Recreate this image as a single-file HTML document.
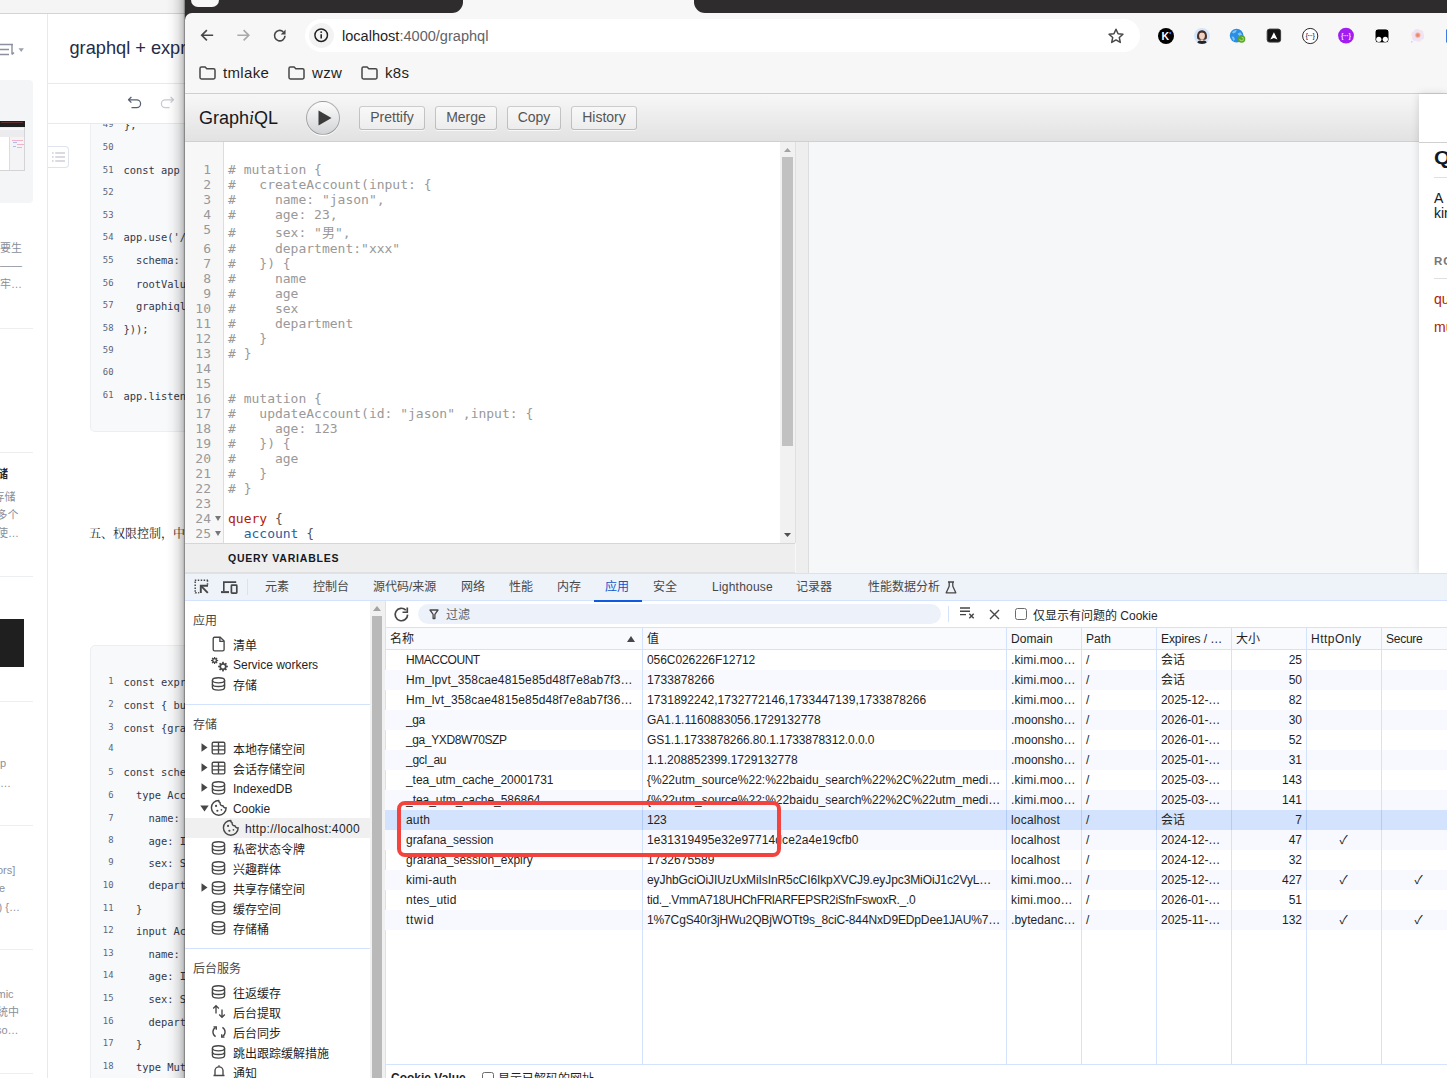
<!DOCTYPE html>
<html lang="zh">
<head>
<meta charset="utf-8">
<title>graphql</title>
<style>
*{box-sizing:border-box;margin:0;padding:0}
html,body{width:1447px;height:1078px;overflow:hidden;background:#fff}
body{position:relative;font-family:"Liberation Sans","Noto Sans CJK SC",sans-serif;font-size:12px;color:#1f1f1f}
.abs{position:absolute}
svg{display:block;position:absolute;overflow:visible}
/* ---------- background doc page (left) ---------- */
#doc{position:absolute;left:0;top:0;width:190px;height:1078px;background:#fff;overflow:hidden}
#doc .topbar{position:absolute;left:0;top:0;width:190px;height:14px;background:#f5f5f5;border-bottom:1px solid #d4d4d4}
#doc .side{position:absolute;left:0;top:14px;width:48px;height:1064px;border-right:1px solid #e6e9f0;background:#fff}
#doc .title{position:absolute;left:69.5px;top:37px;font-size:18.2px;line-height:22px;color:#262b47;white-space:nowrap}
#doc .hl{position:absolute;left:48px;height:1px;background:#e7e9ee;width:141px}
.code1,.code2{position:absolute;left:90px;width:110px;background:#f8f9fa;border:1px solid #eceef1}
.ln{position:absolute;font-family:"DejaVu Sans Mono","Liberation Mono",monospace;font-size:8.9px;color:#5c6379;white-space:pre;text-align:right;width:23.5px;line-height:12px}
.cd{position:absolute;font-family:"DejaVu Sans Mono","Liberation Mono",monospace;font-size:10.4px;color:#33384d;white-space:pre;line-height:12px;margin-top:.8px}
.stx{position:absolute;font-size:11px;color:#8a8f99;white-space:nowrap;line-height:14px}
/* ---------- browser window ---------- */
#shadow{position:absolute;left:166px;top:0;width:19px;height:1078px;background:linear-gradient(to right,rgba(0,0,0,0) 0%,rgba(0,0,0,.03) 35%,rgba(0,0,0,.10) 65%,rgba(0,0,0,.22) 90%,rgba(0,0,0,.34) 95%,rgba(0,0,0,.58) 100%)}
#win{position:absolute;left:185px;top:0;width:1262px;height:1078px;background:#f7f7f7;overflow:hidden}
#tabstrip{position:absolute;left:0;top:0;width:1262px;height:20px;background:#2f2c2d}
#chrome{position:absolute;left:0;top:12.5px;width:1262px;height:81.5px;background:#f7f7f7;border-top-left-radius:7px;border-bottom:1px solid #cfcfcf}
#urlpill{position:absolute;left:120px;top:6.2px;width:835px;height:33.6px;border-radius:17px;background:#fff}
.bm{position:absolute;top:51.5px;letter-spacing:.35px;font-size:15px;color:#1f1f1f;line-height:18px;white-space:nowrap}
/* ---------- GraphiQL ---------- */
#gtop{position:absolute;left:0;top:94px;width:1262px;height:48px;background:linear-gradient(#f7f7f7,#e2e2e2);border-bottom:1px solid #d0d0d0}
.gbtn{position:absolute;top:12px;height:24px;border-radius:3px;background:linear-gradient(#f9f9f9,#ececec);box-shadow:inset 0 0 0 1px rgba(0,0,0,.20),0 1px 0 rgba(255,255,255,.7),inset 0 1px #fff;font-size:14px;line-height:22.5px;text-align:center;color:#555}
#editor{position:absolute;left:0;top:142px;width:611px;height:401px;border-right:1px solid #e0e0e0;background:#fff;overflow:hidden}
#gutter{position:absolute;left:0;top:0;width:39px;height:403px;background:#f7f7f7;border-right:1px solid #ddd}
.gl{position:absolute;left:0;width:26px;text-align:right;font-family:"DejaVu Sans Mono",monospace;font-size:13px;line-height:15px;color:#999;white-space:pre}
.cl{position:absolute;left:43px;font-family:"DejaVu Sans Mono","Noto Sans CJK SC",monospace;font-size:13px;line-height:15px;color:#999;white-space:pre}
#qv{position:absolute;left:0;top:543px;width:610px;height:30px;background:#eee;border-top:1px solid #d6d6d6;border-bottom:1px solid #e0e0e0}
#result{position:absolute;left:611px;top:142px;width:623px;height:431px;background:#f6f7f8}
#docx{position:absolute;left:1234px;top:94px;width:28px;height:479px;background:#fff;box-shadow:0 0 8px rgba(0,0,0,.15);overflow:hidden}
/* ---------- DevTools ---------- */
#dt{position:absolute;left:0;top:573px;width:1262px;height:505px;background:#fff}
#dttabs{position:absolute;left:0;top:0;width:1262px;height:28px;background:#eef2f9;border-top:1px solid #d3e3fd;border-bottom:1px solid #d3e3fd}
.tab{position:absolute;top:6px;font-size:12px;line-height:15px;color:#474747;white-space:nowrap}
.sb{position:absolute;font-size:12px;line-height:16px;color:#1f1f1f;white-space:nowrap}
.sbh{position:absolute;left:8px;font-size:12px;line-height:16px;color:#474747;white-space:nowrap}
.th{position:absolute;top:57.7px;font-size:12px;line-height:16px;color:#1f1f1f;white-space:nowrap}
.row{position:absolute;left:200px;width:1062px;height:20px;overflow:hidden}
.row.alt{background:#f7f9fe}
.row.sel{background:#d3e3fd}
.c{position:absolute;top:2px;font-size:12px;line-height:16px;color:#1f1f1f;white-space:nowrap}
.vl{position:absolute;top:55px;width:1px;height:437px;background:#d3e3fd}
</style>
</head>
<body>
<!-- DOC -->
<div id="doc">
  <div class="topbar"></div>
  <div class="side"></div>
  <svg style="left:0;top:42px" width="26" height="16" viewBox="0 0 26 16"><g fill="none" stroke="#8a90a0" stroke-width="1.4"><path d="M0 2.5h13M0 7.5h9M0 12.5h9M12 3v9.5M12 12.5l2-2"/></g><path d="M18.5 6.3h5.4l-2.7 3.6z" fill="#9aa0ad"/></svg>
  <div class="abs" style="left:0;top:80px;width:33px;height:123px;background:#f4f5f7;border-radius:0 4px 4px 0"></div>
  <div class="abs" style="left:0;top:120.500px;width:25px;height:50.500px;background:#fff;border:1px solid #d4d4d6;border-left:0;border-top:0"></div>
  <div class="abs" style="left:0;top:120.700px;width:24.500px;height:6.300px;background:#1f1f1f"></div>
  <div class="abs" style="left:1px;top:121.500px;width:22px;height:1px;background:#7a3a3a;opacity:.7"></div>
  <div class="abs" style="left:0;top:127px;width:24px;height:10px;background:#ececee"></div>
  <div class="abs" style="left:0;top:128px;width:24px;height:2px;background:#f7f7f9"></div>
  <div class="abs" style="left:8.500px;top:137px;width:15.500px;height:33px;background:#f4f4f7;border-left:1px solid #dcdce0"></div>
  <div class="abs" style="left:12px;top:139.500px;width:11px;height:1px;background:#f3b3c6"></div><div class="abs" style="left:13px;top:141.500px;width:4px;height:1px;background:#a9c0ea"></div><div class="abs" style="left:17px;top:143.500px;width:7px;height:1px;background:#f3b3c6"></div>
  <div class="abs" style="left:13px;top:146px;width:3px;height:1px;background:#a9c0ea"></div><div class="abs" style="left:17px;top:147px;width:5px;height:1px;background:#f3b3c6"></div>
  <div class="stx" style="left:0px;top:241px;">要生</div>
  <div class="stx" style="left:0px;top:258px;">——</div>
  <div class="stx" style="left:0px;top:277px;">牢…</div>
  <div class="abs" style="left:0;top:328px;width:33px;height:1px;background:#eceef0"></div>
  <div class="abs" style="left:0;top:452px;width:33px;height:1px;background:#eceef0"></div>
  <div class="abs" style="left:0;top:576px;width:33px;height:1px;background:#eceef0"></div>
  <div class="abs" style="left:0;top:701px;width:33px;height:1px;background:#eceef0"></div>
  <div class="abs" style="left:0;top:825px;width:33px;height:1px;background:#eceef0"></div>
  <div class="abs" style="left:0;top:949px;width:33px;height:1px;background:#eceef0"></div>
  <div class="abs" style="left:0;top:1073px;width:33px;height:1px;background:#eceef0"></div>
  <div class="stx" style="left:-3px;top:467px;font-weight:bold;color:#262626">储</div>
  <div class="stx" style="left:-6.500px;top:490px;">存储</div>
  <div class="stx" style="left:-3.500px;top:508px;">多个</div>
  <div class="stx" style="left:-3px;top:526px;">使…</div>
  <div class="abs" style="left:0;top:619px;width:24px;height:48px;background:#1f1f1f"></div>
  <div class="stx" style="left:0px;top:756px;">p</div>
  <div class="stx" style="left:0px;top:776px;">…</div>
  <div class="stx" style="left:-3px;top:863px;">ors]</div>
  <div class="stx" style="left:-1px;top:881px;">e</div>
  <div class="stx" style="left:-1.5px;top:900px;">) {…</div>
  <div class="stx" style="left:-3.5px;top:987px;">mic</div>
  <div class="stx" style="left:-3px;top:1005px;">统中</div>
  <div class="stx" style="left:-4px;top:1023px;">so…</div>
  <div class="title">graphql + express</div>
  <div class="hl" style="top:83px"></div>
  <div class="hl" style="top:123px"></div>
  <svg style="left:127px;top:96px" width="16" height="14" viewBox="0 0 16 14"><path d="M1.5 3.8h8.2a3.9 3.9 0 0 1 0 7.8H4.5M4.4 1L1.5 3.8l2.9 2.8" fill="none" stroke="#585f74" stroke-width="1.25" stroke-linejoin="round"/></svg>
  <svg style="left:160px;top:96px" width="16" height="14" viewBox="0 0 16 14"><path d="M13.5 3.8H5.3a3.9 3.9 0 0 0 0 7.8h4.2M10.6 1l2.9 2.8-2.9 2.8" fill="none" stroke="#c6c9d0" stroke-width="1.25" stroke-linejoin="round"/></svg>
  <div class="abs" style="left:48px;top:146px;width:20.500px;height:22px;background:#fff;border:1px solid #dfe3ee;border-left:0;border-radius:0 4px 4px 0"></div>
  <svg style="left:51.5px;top:151.8px" width="13" height="10" viewBox="0 0 13 10"><g stroke="#b3b8c4" stroke-width="1.1"><path d="M0 1h1.6M3.2 1H13M0 5h1.6M3.2 5H13M0 9h1.6M3.2 9H13"/></g></svg>
  <div class="code1" style="top:124px;height:307.500px;border-top:0;border-radius:0 0 0 5px"></div>
  <div class="abs" style="left:90px;top:124px;width:100px;height:20px;overflow:hidden"><div class="ln" style="left:0;top:-5.6px">49</div><div class="cd" style="left:34px;top:-5.6px">},</div></div>
  <div class="ln" style="left:90px;top:140.55px">50</div>
  <div class="ln" style="left:90px;top:163.55px">51</div>
  <div class="cd" style="left:123.5px;top:163.55px">const app =</div>
  <div class="ln" style="left:90px;top:185.55px">52</div>
  <div class="ln" style="left:90px;top:208.55px">53</div>
  <div class="ln" style="left:90px;top:230.55px">54</div>
  <div class="cd" style="left:123.5px;top:230.55px">app.use('/g</div>
  <div class="ln" style="left:90px;top:253.55px">55</div>
  <div class="cd" style="left:123.5px;top:253.55px">  schema: s</div>
  <div class="ln" style="left:90px;top:276.80px">56</div>
  <div class="cd" style="left:123.5px;top:276.80px">  rootValue</div>
  <div class="ln" style="left:90px;top:298.80px">57</div>
  <div class="cd" style="left:123.5px;top:298.80px">  graphiql:</div>
  <div class="ln" style="left:90px;top:321.80px">58</div>
  <div class="cd" style="left:123.5px;top:321.80px">}));</div>
  <div class="ln" style="left:90px;top:344.30px">59</div>
  <div class="ln" style="left:90px;top:366.30px">60</div>
  <div class="ln" style="left:90px;top:389.30px">61</div>
  <div class="cd" style="left:123.5px;top:389.30px">app.listen(</div>
  <div class="abs" style="left:89px;top:525px;font-family:'Liberation Serif','Noto Serif CJK SC',serif;font-size:12px;line-height:18px;color:#262626;white-space:nowrap">五、权限控制，中间件</div>
  <div class="code2" style="top:645px;height:440px;border-radius:5px 0 0 0"></div>
  <div class="ln" style="left:90px;top:675.05px">1</div>
  <div class="cd" style="left:123.5px;top:675.05px">const expre</div>
  <div class="ln" style="left:90px;top:698.05px">2</div>
  <div class="cd" style="left:123.5px;top:698.05px">const { bui</div>
  <div class="ln" style="left:90px;top:721.05px">3</div>
  <div class="cd" style="left:123.5px;top:721.05px">const {grap</div>
  <div class="ln" style="left:90px;top:742.30px">4</div>
  <div class="ln" style="left:90px;top:765.55px">5</div>
  <div class="cd" style="left:123.5px;top:765.55px">const schem</div>
  <div class="ln" style="left:90px;top:788.55px">6</div>
  <div class="cd" style="left:123.5px;top:788.55px">  type Acco</div>
  <div class="ln" style="left:90px;top:811.55px">7</div>
  <div class="cd" style="left:123.5px;top:811.55px">    name: S</div>
  <div class="ln" style="left:90px;top:834.05px">8</div>
  <div class="cd" style="left:123.5px;top:834.05px">    age: In</div>
  <div class="ln" style="left:90px;top:856.30px">9</div>
  <div class="cd" style="left:123.5px;top:856.30px">    sex: St</div>
  <div class="ln" style="left:90px;top:878.55px">10</div>
  <div class="cd" style="left:123.5px;top:878.55px">    departm</div>
  <div class="ln" style="left:90px;top:901.80px">11</div>
  <div class="cd" style="left:123.5px;top:901.80px">  }</div>
  <div class="ln" style="left:90px;top:924.30px">12</div>
  <div class="cd" style="left:123.5px;top:924.30px">  input Acc</div>
  <div class="ln" style="left:90px;top:946.80px">13</div>
  <div class="cd" style="left:123.5px;top:946.80px">    name: S</div>
  <div class="ln" style="left:90px;top:969.30px">14</div>
  <div class="cd" style="left:123.5px;top:969.30px">    age: In</div>
  <div class="ln" style="left:90px;top:992.30px">15</div>
  <div class="cd" style="left:123.5px;top:992.30px">    sex: St</div>
  <div class="ln" style="left:90px;top:1014.80px">16</div>
  <div class="cd" style="left:123.5px;top:1014.80px">    departm</div>
  <div class="ln" style="left:90px;top:1037.30px">17</div>
  <div class="cd" style="left:123.5px;top:1037.30px">  }</div>
  <div class="ln" style="left:90px;top:1059.80px">18</div>
  <div class="cd" style="left:123.5px;top:1059.80px">  type Muta</div>
</div>
<div id="shadow"></div>
<!-- WINDOW -->
<div id="win">
  <div id="tabstrip">
    <div class="abs" style="left:262px;top:0;width:263px;height:20px;background:#f7f7f7"></div>
    <div class="abs" style="left:0;top:0;width:278px;height:13px;background:#2f2c2d;border-bottom-right-radius:11px"></div>
    <div class="abs" style="left:509px;top:0;width:753px;height:13px;background:#2f2c2d;border-bottom-left-radius:11px"></div>
    <div class="abs" style="left:6px;top:-10px;width:28px;height:17px;background:#f7f7f7;border-radius:7px"></div>
    <div class="abs" style="left:335px;top:-14.3px;font-size:12px;line-height:14px;color:#1f1f1f;white-space:nowrap">GraphiQL Playground</div>
  </div>
  <div id="chrome">
    <div id="urlpill"></div>
    <svg style="left:15px;top:15.800px" width="14.500" height="14.500" viewBox="0 0 16 16"><path d="M14.5 8H2.2M7.6 2.3L1.9 8l5.700 5.700" fill="none" stroke="#474747" stroke-width="1.850"/></svg>
    <svg style="left:51px;top:15.800px" width="14.500" height="14.500" viewBox="0 0 16 16"><path d="M1.5 8h12.3M8.4 2.3L14.100 8l-5.700 5.700" fill="none" stroke="#a9a9a9" stroke-width="1.850"/></svg>
    <svg style="left:86.500px;top:15.300px" width="15.500" height="15.500" viewBox="0 0 16 16"><path d="M13.4 8A5.4 5.4 0 1 1 11.6 3.900" fill="none" stroke="#474747" stroke-width="1.7"/><path d="M14 1.6v5h-5z" fill="#474747"/></svg>
    <div class="abs" style="left:124px;top:10.500px;width:25px;height:25px;border-radius:50%;background:#f3f3f3"></div>
    <svg style="left:128.300px;top:14.800px" width="16.400" height="16.400" viewBox="0 0 17 17"><circle cx="8.5" cy="8.5" r="6.500" fill="none" stroke="#1f1f1f" stroke-width="1.5"/><path d="M8.5 7.6v4.4" stroke="#1f1f1f" stroke-width="1.6"/><circle cx="8.5" cy="5.3" r="1" fill="#1f1f1f"/></svg>
    <div class="abs" style="left:157px;top:14px;font-size:14.55px;line-height:18px;white-space:nowrap;color:#1f1f1f">localhost<span style="color:#5f6368">:4000/graphql</span></div>
    <svg style="left:922px;top:14px" width="18" height="18" viewBox="0 0 18 18"><path d="M9 2.2l2.05 4.5 4.9.55-3.65 3.3 1 4.85L9 12.95 4.7 15.4l1-4.85-3.65-3.3 4.9-.55z" fill="none" stroke="#474747" stroke-width="1.5" stroke-linejoin="round"/></svg>
    <!-- extensions -->
    <svg style="left:965px;top:13.500px" width="297" height="20" viewBox="1150 26 297 20">
      <defs><radialGradient id="flc"><stop offset="0" stop-color="#e8623f"/><stop offset=".55" stop-color="#f0987c"/><stop offset="1" stop-color="#f6d3d0" stop-opacity="0"/></radialGradient>
      <clipPath id="avc"><circle cx="1202" cy="36" r="8"/></clipPath></defs>
      <circle cx="1166" cy="36" r="8" fill="#000"/>
      <text x="1161.600" y="39.900" font-family="Liberation Sans,sans-serif" font-weight="bold" font-size="10.500" fill="#fff">K</text>
      <circle cx="1170.200" cy="33.100" r="1.100" fill="#2d7cff"/>
      <circle cx="1202" cy="36" r="8" fill="#d3e6fb"/>
      <g clip-path="url(#avc)"><path d="M1197.200 38.500c-.7-4.500.8-8.300 4.800-8.300s5.500 3.800 4.800 8.300l-1.600 1.300h-6.400z" fill="#4a2f27"/><ellipse cx="1202" cy="35.800" rx="2.900" ry="3.500" fill="#f0d2c3"/><path d="M1199 33.800c1.200-1.400 3.600-1.800 5.800-.4l.3-1.400-2.600-1.300-3 .7z" fill="#4a2f27"/><path d="M1196.500 44.500c.4-3 2.400-4.200 5.500-4.200s5.100 1.200 5.500 4.200z" fill="#22232b"/><path d="M1200.700 39.500h2.600v1.600h-2.600z" fill="#f0d2c3"/></g>
      <circle cx="1236.600" cy="35.600" r="6.800" fill="#2b8de3"/>
      <path d="M1232 32.500c1.200-1.800 3-2.700 4.800-2.500l-1 2.200-2.300 1.300zM1237.500 33.800l2.800-1.600 1.800 2.400-2.600 1.700zM1231.500 36.500l2.400.3 1 2.800-1.400 1.400z" fill="#7cc6f7"/>
      <circle cx="1241.600" cy="39" r="3.700" fill="#5aa62b"/>
      <path d="M1239.800 39a1.800 1.800 0 1 0 1.800-1.800" fill="none" stroke="#a6d96a" stroke-width="1.100"/>
      <rect x="1267.200" y="29.100" width="13.400" height="13" rx="2.300" fill="#141414" stroke="#3c3c3c" stroke-width="1"/>
      <path d="M1273.900 32.300l3.600 7.100-3.600-1.500-3.600 1.500z" fill="#fff"/>
      <circle cx="1310.200" cy="36" r="7.600" fill="#fff" stroke="#2b2b2b" stroke-width="1"/>
      <text x="1305.700" y="38.300" textLength="9" lengthAdjust="spacingAndGlyphs" font-family="Liberation Sans,sans-serif" font-weight="bold" font-size="7" fill="#2b2b2b">{···}</text>
      <circle cx="1346" cy="35.600" r="7.900" fill="#a21df0"/>
      <text x="1341.300" y="37.900" textLength="9.400" lengthAdjust="spacingAndGlyphs" font-family="Liberation Sans,sans-serif" font-weight="bold" font-size="7" fill="#fff">{···}</text>
      <rect x="1375" y="28.900" width="14" height="14" rx="3" fill="#000" stroke="#fff" stroke-width="1"/>
      <circle cx="1378.800" cy="39.300" r="2.600" fill="#fff"/><circle cx="1385.300" cy="39.300" r="2.600" fill="#fff"/>
      <circle cx="1420.95" cy="36.38" r="3.200" fill="#ebe4f6"/><circle cx="1418.53" cy="38.62" r="3.200" fill="#f3e3ee"/><circle cx="1415.38" cy="37.64" r="3.200" fill="#ebe4f6"/><circle cx="1414.65" cy="34.42" r="3.200" fill="#f3e3ee"/><circle cx="1417.07" cy="32.18" r="3.200" fill="#ebe4f6"/><circle cx="1420.22" cy="33.16" r="3.200" fill="#f3e3ee"/>
      <circle cx="1411.800" cy="41.800" r=".9" fill="#d9d0f2"/>
      <circle cx="1417.800" cy="35.200" r="3.600" fill="url(#flc)" opacity=".85"/>
      <rect x="1446" y="29.500" width="3" height="13" fill="#3f7be0"/>
    </svg>
    <!-- bookmarks -->
    <svg style="left:14px;top:53px" width="17" height="14" viewBox="0 0 17 14"><path d="M1 2.4c0-.8.6-1.4 1.4-1.4h3.7l1.7 1.8h6.8c.8 0 1.4.6 1.4 1.4v7.4c0 .8-.6 1.4-1.4 1.4H2.400c-.8 0-1.4-.6-1.4-1.4z" fill="none" stroke="#474747" stroke-width="1.5"/></svg>
    <div class="bm" style="left:38px">tmlake</div>
    <svg style="left:103px;top:53px" width="17" height="14" viewBox="0 0 17 14"><path d="M1 2.4c0-.8.6-1.4 1.4-1.4h3.7l1.7 1.8h6.8c.8 0 1.4.6 1.4 1.4v7.4c0 .8-.6 1.4-1.4 1.4H2.400c-.8 0-1.4-.6-1.4-1.4z" fill="none" stroke="#474747" stroke-width="1.5"/></svg>
    <div class="bm" style="left:127px">wzw</div>
    <svg style="left:176px;top:53px" width="17" height="14" viewBox="0 0 17 14"><path d="M1 2.4c0-.8.6-1.4 1.4-1.4h3.7l1.7 1.8h6.8c.8 0 1.4.6 1.4 1.4v7.4c0 .8-.6 1.4-1.4 1.4H2.400c-.8 0-1.4-.6-1.4-1.4z" fill="none" stroke="#474747" stroke-width="1.5"/></svg>
    <div class="bm" style="left:200px">k8s</div>
  </div>
  <div id="gtop">
    <div class="abs" style="left:14px;top:13px;font-size:18px;line-height:22px;color:#141823;white-space:nowrap">Graph<i style="font-family:'Liberation Serif',serif">i</i>QL</div>
    <div class="abs" style="left:121px;top:7px;width:34px;height:34px;border-radius:50%;background:linear-gradient(#fdfdfd,#d2d3d6);box-shadow:0 1px 0 #fff;border:1px solid rgba(0,0,0,.28)"></div>
    <svg style="left:133px;top:16px" width="14" height="16" viewBox="0 0 14 16"><path d="M0.5 0.5v15l13-7.500z" fill="#3b3b3b"/></svg>
    <div class="gbtn" style="left:174px;width:66px">Prettify</div>
    <div class="gbtn" style="left:250px;width:62px">Merge</div>
    <div class="gbtn" style="left:322px;width:54px">Copy</div>
    <div class="gbtn" style="left:386px;width:66px">History</div>
  </div>
  <div id="editor"><div id="gutter"></div>
    <div class="gl" style="top:19.5px">1</div>
    <div class="cl" style="top:19.5px"># mutation {</div>
    <div class="gl" style="top:34.5px">2</div>
    <div class="cl" style="top:34.5px">#   createAccount(input: {</div>
    <div class="gl" style="top:49.5px">3</div>
    <div class="cl" style="top:49.5px">#     name: "jason",</div>
    <div class="gl" style="top:64.5px">4</div>
    <div class="cl" style="top:64.5px">#     age: 23,</div>
    <div class="gl" style="top:79.5px">5</div>
    <div class="cl" style="top:82.5px">#     sex: "男",</div>
    <div class="gl" style="top:98.5px">6</div>
    <div class="cl" style="top:98.5px">#     department:"xxx"</div>
    <div class="gl" style="top:113.5px">7</div>
    <div class="cl" style="top:113.5px">#   }) {</div>
    <div class="gl" style="top:128.5px">8</div>
    <div class="cl" style="top:128.5px">#     name</div>
    <div class="gl" style="top:143.5px">9</div>
    <div class="cl" style="top:143.5px">#     age</div>
    <div class="gl" style="top:158.5px">10</div>
    <div class="cl" style="top:158.5px">#     sex</div>
    <div class="gl" style="top:173.5px">11</div>
    <div class="cl" style="top:173.5px">#     department</div>
    <div class="gl" style="top:188.5px">12</div>
    <div class="cl" style="top:188.5px">#   }</div>
    <div class="gl" style="top:203.5px">13</div>
    <div class="cl" style="top:203.5px"># }</div>
    <div class="gl" style="top:218.5px">14</div>
    <div class="gl" style="top:233.5px">15</div>
    <div class="gl" style="top:248.5px">16</div>
    <div class="cl" style="top:248.5px"># mutation {</div>
    <div class="gl" style="top:263.5px">17</div>
    <div class="cl" style="top:263.5px">#   updateAccount(id: "jason" ,input: {</div>
    <div class="gl" style="top:278.5px">18</div>
    <div class="cl" style="top:278.5px">#     age: 123</div>
    <div class="gl" style="top:293.5px">19</div>
    <div class="cl" style="top:293.5px">#   }) {</div>
    <div class="gl" style="top:308.5px">20</div>
    <div class="cl" style="top:308.5px">#     age</div>
    <div class="gl" style="top:323.5px">21</div>
    <div class="cl" style="top:323.5px">#   }</div>
    <div class="gl" style="top:338.5px">22</div>
    <div class="cl" style="top:338.5px"># }</div>
    <div class="gl" style="top:353.5px">23</div>
    <div class="gl" style="top:368.5px">24</div>
    <div class="cl" style="top:368.5px"><span style="color:#b11a04">query</span> <span style="color:#555">{</span></div>
    <div class="gl" style="top:383.5px">25</div>
    <div class="cl" style="top:383.5px">  <span style="color:#1f61a0">account</span> <span style="color:#555">{</span></div>
    <svg style="left:29.5px;top:374.3px" width="6" height="5" viewBox="0 0 6 5"><path d="M0 0h6L3 5z" fill="#777"/></svg>
    <svg style="left:29.5px;top:389.3px" width="6" height="5" viewBox="0 0 6 5"><path d="M0 0h6L3 5z" fill="#777"/></svg>
    <div class="abs" style="left:595px;top:0;width:15px;height:403px;background:#f1f1f1"></div>
    <div class="abs" style="left:597px;top:15px;width:11px;height:289px;background:#c1c1c1"></div>
    <svg style="left:599px;top:6px" width="7" height="4" viewBox="0 0 7 4"><path d="M0 4h7L3.500 0z" fill="#a3a3a3"/></svg>
    <svg style="left:599px;top:391px" width="7" height="4" viewBox="0 0 7 4"><path d="M0 0h7L3.500 4z" fill="#505050"/></svg>
    </div>
  <div id="qv"><div class="abs" style="left:43px;top:7.200px;font-size:10.5px;line-height:14px;font-weight:bold;letter-spacing:.78px;color:#141823;white-space:nowrap;font-variant:small-caps;text-transform:uppercase">Query Variables</div></div>
  <div id="result"><div class="abs" style="left:0;top:0;width:13px;height:431px;background:#eee;border-right:1px solid #ddd"></div></div>
  <div id="docx">
    <div class="abs" style="left:0;top:0;width:29px;height:49px;background:#fff;border-bottom:1px solid #d0d0d0"></div>
    <div class="abs" style="left:14.5px;top:51.5px;font-size:18.5px;line-height:24px;font-weight:bold;color:#141823;transform:scaleX(1.16);transform-origin:0 0">Query</div>
    <div class="abs" style="left:15px;top:83px;width:14px;height:1px;background:#e0e0e0"></div>
    <div class="abs" style="left:15px;top:97px;font-size:14px;line-height:15px;color:#141823;white-space:nowrap">A&nbsp;&nbsp;GraphQL<br>kind</div>
    <div class="abs" style="left:15px;top:160px;font-size:11.5px;line-height:14px;font-weight:bold;letter-spacing:1px;color:#777;white-space:nowrap">ROOT TYPES</div>
    <div class="abs" style="left:15px;top:183.5px;width:14px;height:1px;background:#e0e0e0"></div>
    <div class="abs" style="left:15px;top:197px;font-size:14px;line-height:16px;color:#b11a04;white-space:nowrap">query</div>
    <div class="abs" style="left:15px;top:225px;font-size:14px;line-height:16px;color:#b11a04;white-space:nowrap">mutation</div>
  </div>
  <div id="dt">
    <div id="dttabs">
    <svg style="left:9px;top:5.300px" width="15" height="15" viewBox="0 0 15 15"><g fill="none" stroke="#474747" stroke-width="1.500"><path d="M0.800 1.200h13.200M13.500 1.200v4.500" stroke-dasharray="1.500 1.450"/><path d="M1.200 2.500v12M1.200 13.700h4" stroke-dasharray="1.500 1.450"/><path d="M7.200 7.200l6.600 6.600" stroke-width="1.900"/><path d="M6.800 14V6.800H14" stroke-width="1.900"/></g></svg>
    <svg style="left:35px;top:5px" width="18" height="15" viewBox="0 0 18 15"><g fill="none" stroke="#474747"><path d="M3.800 12V3.100h12.400" stroke-width="1.600"/><path d="M1 13.100h8" stroke-width="2"/><rect x="11.400" y="6.100" width="5.400" height="8" rx=".6" stroke-width="1.700"/></g></svg>
    <div class="abs" style="left:62px;top:5px;width:1px;height:16px;background:#d3e3fd"></div>
    <div class="tab" style="left:80px;">元素</div>
    <div class="tab" style="left:128px;">控制台</div>
    <div class="tab" style="left:188px;">源代码/来源</div>
    <div class="tab" style="left:276px;">网络</div>
    <div class="tab" style="left:324px;">性能</div>
    <div class="tab" style="left:372px;">内存</div>
    <div class="tab" style="left:420px;color:#0b57d0;">应用</div>
    <div class="tab" style="left:468px;">安全</div>
    <div class="tab" style="left:527px;;letter-spacing:0.228px">Lighthouse</div>
    <div class="tab" style="left:611px;">记录器</div>
    <div class="tab" style="left:683px;">性能数据分析</div>
    <div class="abs" style="left:409px;top:25.600px;width:48px;height:2.300px;background:#0e5ae0"></div>
    <svg style="left:760px;top:7px" width="12" height="13" viewBox="0 0 12 13"><path d="M4.200 1v4.200L1.200 11.800h9.600L7.800 5.200V1M3 1h6" fill="none" stroke="#474747" stroke-width="1.300" stroke-linejoin="round"/></svg>
    </div>
    <div class="sbh" style="top:40px">应用</div>
    <svg style="left:26.5px;top:62.8px" width="14" height="16" viewBox="0 0 14 16"><path d="M2.6 1.2h5.6l3.9 3.9v8.300c0 .8-.6 1.400-1.400 1.400H2.600c-.8 0-1.400-.6-1.400-1.400V2.600c0-.8.6-1.400 1.400-1.400z" fill="none" stroke="#474747" stroke-width="1.35"/><path d="M7.900 1.400v4h4" fill="none" stroke="#474747" stroke-width="1.35"/></svg>
    <div class="sb" style="left:48px;top:65px">清单</div>
    <svg style="left:24px;top:82px" width="20" height="18" viewBox="0 0 20 18"><path d="M8.00 4.78L9.16 4.96L9.16 6.04L8.00 6.22L7.80 6.69L8.50 7.64L7.74 8.40L6.79 7.70L6.32 7.90L6.14 9.06L5.06 9.06L4.88 7.90L4.41 7.70L3.46 8.40L2.70 7.64L3.40 6.69L3.20 6.22L2.04 6.04L2.04 4.96L3.20 4.78L3.40 4.31L2.70 3.36L3.46 2.60L4.41 3.30L4.88 3.10L5.06 1.94L6.14 1.94L6.32 3.10L6.79 3.30L7.74 2.60L8.50 3.36L7.80 4.31zM6.75 5.50a1.15 1.15 0 1 0 -2.30 0a1.15 1.15 0 1 0 2.30 0zM17.35 10.60L18.85 10.87L18.85 12.33L17.35 12.60L17.08 13.26L17.94 14.51L16.91 15.54L15.66 14.68L15.00 14.95L14.73 16.45L13.27 16.45L13.00 14.95L12.34 14.68L11.09 15.54L10.06 14.51L10.92 13.26L10.65 12.60L9.15 12.33L9.15 10.87L10.65 10.60L10.92 9.94L10.06 8.69L11.09 7.66L12.34 8.52L13.00 8.25L13.27 6.75L14.73 6.75L15.00 8.25L15.66 8.52L16.91 7.66L17.94 8.69L17.08 9.94zM15.90 11.60a1.90 1.90 0 1 0 -3.80 0a1.90 1.90 0 1 0 3.80 0z" fill="#474747" fill-rule="evenodd"/></svg>
    <div class="sb" style="left:48px;top:84px;letter-spacing:-0.017px">Service workers</div>
    <svg style="left:25.7px;top:103.8px" width="15" height="14" viewBox="0 0 15 14"><g fill="none" stroke="#474747" stroke-width="1.35"><ellipse cx="7.5" cy="3.3" rx="6.1" ry="2.6"/><path d="M1.400 3.300v7.200c0 1.450 2.700 2.600 6.100 2.600s6.100-1.150 6.100-2.600V3.300"/><path d="M1.400 6.900c0 1.450 2.700 2.600 6.100 2.600s6.100-1.150 6.100-2.600"/></g></svg>
    <div class="sb" style="left:48px;top:105px">存储</div>
    <div class="abs" style="left:0;top:131px;width:185px;height:1px;background:#d3e3fd"></div>
    <div class="sbh" style="top:144px">存储</div>
    <svg style="left:15.5px;top:169.8px" width="7" height="9" viewBox="0 0 7 9"><path d="M0.500 0.300v8.400l6-4.200z" fill="#474747"/></svg>
    <svg style="left:25.7px;top:167.8px" width="15" height="14" viewBox="0 0 15 14"><g fill="none" stroke="#474747" stroke-width="1.35"><rect x="1.200" y="1.200" width="12.600" height="11.600" rx="1.300"/><path d="M1.200 5.100h12.600M1.200 8.900h12.600M7.500 1.200v11.600"/></g></svg>
    <div class="sb" style="left:48px;top:169px">本地存储空间</div>
    <svg style="left:15.5px;top:189.8px" width="7" height="9" viewBox="0 0 7 9"><path d="M0.500 0.300v8.400l6-4.200z" fill="#474747"/></svg>
    <svg style="left:25.7px;top:187.8px" width="15" height="14" viewBox="0 0 15 14"><g fill="none" stroke="#474747" stroke-width="1.35"><rect x="1.200" y="1.200" width="12.600" height="11.600" rx="1.300"/><path d="M1.200 5.100h12.600M1.200 8.900h12.600M7.500 1.200v11.600"/></g></svg>
    <div class="sb" style="left:48px;top:189px">会话存储空间</div>
    <svg style="left:15.5px;top:209.8px" width="7" height="9" viewBox="0 0 7 9"><path d="M0.500 0.300v8.400l6-4.200z" fill="#474747"/></svg>
    <svg style="left:25.7px;top:207.8px" width="15" height="14" viewBox="0 0 15 14"><g fill="none" stroke="#474747" stroke-width="1.35"><ellipse cx="7.5" cy="3.3" rx="6.1" ry="2.6"/><path d="M1.400 3.300v7.200c0 1.450 2.700 2.600 6.100 2.600s6.100-1.150 6.100-2.600V3.300"/><path d="M1.400 6.900c0 1.450 2.700 2.600 6.100 2.600s6.100-1.150 6.100-2.600"/></g></svg>
    <div class="sb" style="left:48px;top:208px;letter-spacing:0.003px">IndexedDB</div>
    <svg style="left:14.5px;top:231.8px" width="9" height="7" viewBox="0 0 9 7"><path d="M0.300 0.500h8.400l-4.200 6z" fill="#474747"/></svg>
    <svg style="left:25px;top:226px" width="17.600" height="17.600" viewBox="0 0 16 16"><path d="M8 1.300a6.700 6.700 0 1 0 6.700 6.700c-1.500.3-2.700-.5-2.900-1.900-1.700.1-2.900-1.100-2.600-2.800-1-.3-1.400-1.100-1.200-2z" fill="none" stroke="#474747" stroke-width="1.300" stroke-linejoin="round"/><circle cx="5.500" cy="6.300" r="1" fill="#474747"/><circle cx="6.700" cy="10.700" r="1" fill="#474747"/><circle cx="10.400" cy="9.800" r=".8" fill="#474747"/></svg>
    <div class="sb" style="left:48px;top:228px;letter-spacing:-0.060px">Cookie</div>
    <div class="abs" style="left:0;top:245px;width:185px;height:20px;background:#f0f0f0"></div>
    <svg style="left:37px;top:246px" width="17.600" height="17.600" viewBox="0 0 16 16"><path d="M8 1.300a6.700 6.700 0 1 0 6.700 6.700c-1.500.3-2.700-.5-2.900-1.900-1.700.1-2.900-1.100-2.600-2.800-1-.3-1.400-1.100-1.200-2z" fill="none" stroke="#474747" stroke-width="1.300" stroke-linejoin="round"/><circle cx="5.500" cy="6.300" r="1" fill="#474747"/><circle cx="6.700" cy="10.700" r="1" fill="#474747"/><circle cx="10.400" cy="9.800" r=".8" fill="#474747"/></svg>
    <div class="sb" style="left:60px;top:248px;letter-spacing:0.361px">http://localhost:4000</div>
    <svg style="left:25.7px;top:267.8px" width="15" height="14" viewBox="0 0 15 14"><g fill="none" stroke="#474747" stroke-width="1.35"><ellipse cx="7.5" cy="3.3" rx="6.1" ry="2.6"/><path d="M1.400 3.300v7.200c0 1.450 2.700 2.600 6.100 2.600s6.100-1.150 6.100-2.600V3.300"/><path d="M1.400 6.900c0 1.450 2.700 2.600 6.100 2.600s6.100-1.150 6.100-2.600"/></g></svg>
    <div class="sb" style="left:48px;top:269px">私密状态令牌</div>
    <svg style="left:25.7px;top:287.8px" width="15" height="14" viewBox="0 0 15 14"><g fill="none" stroke="#474747" stroke-width="1.35"><ellipse cx="7.5" cy="3.3" rx="6.1" ry="2.6"/><path d="M1.400 3.300v7.200c0 1.450 2.700 2.600 6.100 2.600s6.100-1.150 6.100-2.600V3.300"/><path d="M1.400 6.900c0 1.450 2.700 2.600 6.100 2.600s6.100-1.150 6.100-2.600"/></g></svg>
    <div class="sb" style="left:48px;top:289px">兴趣群体</div>
    <svg style="left:15.5px;top:309.8px" width="7" height="9" viewBox="0 0 7 9"><path d="M0.500 0.300v8.400l6-4.200z" fill="#474747"/></svg>
    <svg style="left:25.7px;top:307.8px" width="15" height="14" viewBox="0 0 15 14"><g fill="none" stroke="#474747" stroke-width="1.35"><ellipse cx="7.5" cy="3.3" rx="6.1" ry="2.6"/><path d="M1.400 3.300v7.200c0 1.450 2.700 2.600 6.100 2.600s6.100-1.150 6.100-2.600V3.300"/><path d="M1.400 6.900c0 1.450 2.700 2.600 6.100 2.600s6.100-1.150 6.100-2.600"/></g></svg>
    <div class="sb" style="left:48px;top:309px">共享存储空间</div>
    <svg style="left:25.7px;top:327.8px" width="15" height="14" viewBox="0 0 15 14"><g fill="none" stroke="#474747" stroke-width="1.35"><ellipse cx="7.5" cy="3.3" rx="6.1" ry="2.6"/><path d="M1.400 3.300v7.200c0 1.450 2.700 2.600 6.100 2.600s6.100-1.150 6.100-2.600V3.300"/><path d="M1.400 6.900c0 1.450 2.700 2.600 6.100 2.600s6.100-1.150 6.100-2.600"/></g></svg>
    <div class="sb" style="left:48px;top:329px">缓存空间</div>
    <svg style="left:25.7px;top:347.8px" width="15" height="14" viewBox="0 0 15 14"><g fill="none" stroke="#474747" stroke-width="1.35"><ellipse cx="7.5" cy="3.3" rx="6.1" ry="2.6"/><path d="M1.400 3.300v7.200c0 1.450 2.700 2.600 6.100 2.600s6.100-1.150 6.100-2.600V3.300"/><path d="M1.400 6.900c0 1.450 2.700 2.600 6.100 2.600s6.100-1.150 6.100-2.600"/></g></svg>
    <div class="sb" style="left:48px;top:349px">存储桶</div>
    <div class="abs" style="left:0;top:375px;width:185px;height:1px;background:#d3e3fd"></div>
    <div class="sbh" style="top:388px">后台服务</div>
    <svg style="left:25.7px;top:411.8px" width="15" height="14" viewBox="0 0 15 14"><g fill="none" stroke="#474747" stroke-width="1.35"><ellipse cx="7.5" cy="3.3" rx="6.1" ry="2.6"/><path d="M1.400 3.300v7.200c0 1.450 2.700 2.600 6.100 2.600s6.100-1.150 6.100-2.600V3.300"/><path d="M1.400 6.900c0 1.450 2.700 2.600 6.100 2.600s6.100-1.150 6.100-2.600"/></g></svg>
    <div class="sb" style="left:48px;top:413px">往返缓存</div>
    <svg style="left:26.5px;top:430.8px" width="14" height="15" viewBox="0 0 14 15"><path d="M4 9.500V1.800M1.200 4.400L4 1.600l2.800 2.800M10 5.500v7.700M7.200 10.600l2.800 2.800 2.800-2.800" fill="none" stroke="#474747" stroke-width="1.350"/></svg>
    <div class="sb" style="left:48px;top:433px">后台提取</div>
    <svg style="left:26.5px;top:451.8px" width="14" height="14" viewBox="0 0 14 14"><g fill="none" stroke="#474747" stroke-width="1.350"><path d="M3.600 11.600a5.300 5.300 0 0 1 0-9.200M10.400 2.400a5.300 5.300 0 0 1 0 9.200"/><path d="M1.500 1.900h2.800v2.800M12.500 12.100H9.700V9.300"/></g></svg>
    <div class="sb" style="left:48px;top:453px">后台同步</div>
    <svg style="left:25.7px;top:471.8px" width="15" height="14" viewBox="0 0 15 14"><g fill="none" stroke="#474747" stroke-width="1.35"><ellipse cx="7.5" cy="3.3" rx="6.1" ry="2.6"/><path d="M1.400 3.300v7.200c0 1.450 2.700 2.600 6.100 2.600s6.100-1.150 6.100-2.600V3.300"/><path d="M1.400 6.900c0 1.450 2.700 2.600 6.100 2.600s6.100-1.150 6.100-2.600"/></g></svg>
    <div class="sb" style="left:48px;top:473px">跳出跟踪缓解措施</div>
    <svg style="left:26.5px;top:490.8px" width="14" height="15" viewBox="0 0 14 15"><path d="M1.500 11.500h11M3 11.500V6.800a4 4 0 0 1 8 0v4.700M7 1.200v1.600" fill="none" stroke="#474747" stroke-width="1.350"/></svg>
    <div class="sb" style="left:48px;top:493px">通知</div>
    <div class="abs" style="left:185px;top:28px;width:15px;height:477px;background:#f1f1f1"></div>
    <div class="abs" style="left:186.500px;top:43px;width:10.500px;height:470px;background:#b9b9b9"></div>
    <svg style="left:188px;top:33px" width="8" height="5" viewBox="0 0 8 5"><path d="M0 5h8L4 0z" fill="#a3a3a3"/></svg>
    <div class="abs" style="left:200px;top:28px;width:1px;height:477px;background:#d3e3fd"></div>
    <svg style="left:208px;top:32.5px" width="17" height="17" viewBox="0 0 15 15"><path d="M12.900 7.600A5.500 5.500 0 1 1 11.300 3.600" fill="none" stroke="#474747" stroke-width="1.500"/><path d="M12.600 1.300v4.200H8.400" fill="none" stroke="#474747" stroke-width="1.500"/></svg>
    <div class="abs" style="left:233px;top:31px;width:523px;height:20px;border-radius:10px;background:#edf2fa"></div>
    <svg style="left:244px;top:36px" width="10" height="11" viewBox="0 0 10 11"><path d="M1 1h8L5.900 5.300v4.200H4.100V5.300z" fill="none" stroke="#474747" stroke-width="1.300" stroke-linejoin="round"/></svg>
    <div class="abs" style="left:261px;top:34px;font-size:12px;line-height:16px;color:#5f6368">过滤</div>
    <div class="abs" style="left:763px;top:33px;width:1px;height:16px;background:#d3e3fd"></div>
    <svg style="left:774px;top:33px" width="17" height="14" viewBox="0 0 17 14"><path d="M1 2h10M1 5.300h10M1 8.600h6" stroke="#474747" stroke-width="1.400" fill="none"/><path d="M10.300 7.800l4.400 4.400M14.700 7.800l-4.400 4.400" stroke="#474747" stroke-width="1.500" fill="none"/></svg>
    <svg style="left:804px;top:36px" width="11" height="11" viewBox="0 0 11 11"><path d="M1 1l9 9M10 1l-9 9" stroke="#474747" stroke-width="1.400" fill="none"/></svg>
    <div class="abs" style="left:830px;top:35px;width:12px;height:12px;border:1px solid #6b6b6b;border-radius:2.500px;background:#fff"></div>
    <div class="abs" style="left:848px;top:34.700000000000045px;font-size:12px;line-height:16px;color:#1f1f1f;white-space:nowrap">仅显示有问题的 Cookie</div>
    <div class="abs" style="left:201px;top:54px;width:1062px;height:23px;background:#f8fafe;border-top:1px solid #d3e3fd;border-bottom:1px solid #d3e3fd"></div>
    <div class="th" style="left:205px">名称</div>
    <div class="th" style="left:462px">值</div>
    <div class="th" style="left:826px;letter-spacing:0.057px">Domain</div>
    <div class="th" style="left:901px;letter-spacing:0.053px">Path</div>
    <div class="th" style="left:976px;letter-spacing:-0.065px">Expires / …</div>
    <div class="th" style="left:1051px">大小</div>
    <div class="th" style="left:1126px;letter-spacing:0.477px">HttpOnly</div>
    <div class="th" style="left:1201px;letter-spacing:-0.255px">Secure</div>
    <svg style="left:442px;top:63px" width="8" height="6" viewBox="0 0 8 6"><path d="M0 6h8L4 0z" fill="#474747"/></svg>
    <div class="row" style="top:77px"><div class="c" style="left:21px;letter-spacing:-0.478px">HMACCOUNT</div><div class="c" style="left:262px;letter-spacing:-0.077px">056C026226F12712</div><div class="c" style="left:626px;letter-spacing:0.116px">.kimi.moo…</div><div class="c" style="left:701px">/</div><div class="c" style="left:776px">会话</div><div class="c" style="left:851px;width:66px;text-align:right">25</div></div>
    <div class="row alt" style="top:97px"><div class="c" style="left:21px;letter-spacing:0.130px">Hm_lpvt_358cae4815e85d48f7e8ab7f3…</div><div class="c" style="left:262px;letter-spacing:0.075px">1733878266</div><div class="c" style="left:626px;letter-spacing:0.116px">.kimi.moo…</div><div class="c" style="left:701px">/</div><div class="c" style="left:776px">会话</div><div class="c" style="left:851px;width:66px;text-align:right">50</div></div>
    <div class="row" style="top:117px"><div class="c" style="left:21px;letter-spacing:0.130px">Hm_lvt_358cae4815e85d48f7e8ab7f36…</div><div class="c" style="left:262px;letter-spacing:0.050px">1731892242,1732772146,1733447139,1733878266</div><div class="c" style="left:626px;letter-spacing:0.116px">.kimi.moo…</div><div class="c" style="left:701px">/</div><div class="c" style="left:776px;letter-spacing:-0.094px">2025-12-…</div><div class="c" style="left:851px;width:66px;text-align:right">82</div></div>
    <div class="row alt" style="top:137px"><div class="c" style="left:21px;letter-spacing:-0.410px">_ga</div><div class="c" style="left:262px;letter-spacing:0.016px">GA1.1.1160883056.1729132778</div><div class="c" style="left:626px;letter-spacing:-0.023px">.moonsho…</div><div class="c" style="left:701px">/</div><div class="c" style="left:776px;letter-spacing:-0.094px">2026-01-…</div><div class="c" style="left:851px;width:66px;text-align:right">30</div></div>
    <div class="row" style="top:157px"><div class="c" style="left:21px;letter-spacing:-0.383px">_ga_YXD8W70SZP</div><div class="c" style="left:262px;letter-spacing:-0.094px">GS1.1.1733878266.80.1.1733878312.0.0.0</div><div class="c" style="left:626px;letter-spacing:-0.023px">.moonsho…</div><div class="c" style="left:701px">/</div><div class="c" style="left:776px;letter-spacing:-0.094px">2026-01-…</div><div class="c" style="left:851px;width:66px;text-align:right">52</div></div>
    <div class="row alt" style="top:177px"><div class="c" style="left:21px;letter-spacing:-0.250px">_gcl_au</div><div class="c" style="left:262px;letter-spacing:0.018px">1.1.208852399.1729132778</div><div class="c" style="left:626px;letter-spacing:-0.023px">.moonsho…</div><div class="c" style="left:701px">/</div><div class="c" style="left:776px;letter-spacing:-0.094px">2025-01-…</div><div class="c" style="left:851px;width:66px;text-align:right">31</div></div>
    <div class="row" style="top:197px"><div class="c" style="left:21px;letter-spacing:-0.061px">_tea_utm_cache_20001731</div><div class="c" style="left:262px;letter-spacing:0.006px">{%22utm_source%22:%22baidu_search%22%2C%22utm_medi…</div><div class="c" style="left:626px;letter-spacing:0.116px">.kimi.moo…</div><div class="c" style="left:701px">/</div><div class="c" style="left:776px;letter-spacing:-0.094px">2025-03-…</div><div class="c" style="left:851px;width:66px;text-align:right">143</div></div>
    <div class="row alt" style="top:217px"><div class="c" style="left:21px;letter-spacing:-0.045px">_tea_utm_cache_586864</div><div class="c" style="left:262px;letter-spacing:0.006px">{%22utm_source%22:%22baidu_search%22%2C%22utm_medi…</div><div class="c" style="left:626px;letter-spacing:0.116px">.kimi.moo…</div><div class="c" style="left:701px">/</div><div class="c" style="left:776px;letter-spacing:-0.094px">2025-03-…</div><div class="c" style="left:851px;width:66px;text-align:right">141</div></div>
    <div class="row sel" style="top:237px"><div class="c" style="left:21px;letter-spacing:0.160px">auth</div><div class="c" style="left:262px;letter-spacing:-0.177px">123</div><div class="c" style="left:626px;letter-spacing:0.181px">localhost</div><div class="c" style="left:701px">/</div><div class="c" style="left:776px">会话</div><div class="c" style="left:851px;width:66px;text-align:right">7</div></div>
    <div class="row alt" style="top:257px"><div class="c" style="left:21px;letter-spacing:-0.044px">grafana_session</div><div class="c" style="left:262px;letter-spacing:0.079px">1e31319495e32e97714dce2a4e19cfb0</div><div class="c" style="left:626px;letter-spacing:0.181px">localhost</div><div class="c" style="left:701px">/</div><div class="c" style="left:776px;letter-spacing:-0.094px">2024-12-…</div><div class="c" style="left:851px;width:66px;text-align:right">47</div><div class="c" style="left:921px;width:75px;text-align:center">✓</div></div>
    <div class="row" style="top:277px"><div class="c" style="left:21px;letter-spacing:0.002px">grafana_session_expiry</div><div class="c" style="left:262px;letter-spacing:0.075px">1732675589</div><div class="c" style="left:626px;letter-spacing:0.181px">localhost</div><div class="c" style="left:701px">/</div><div class="c" style="left:776px;letter-spacing:-0.094px">2024-12-…</div><div class="c" style="left:851px;width:66px;text-align:right">32</div></div>
    <div class="row alt" style="top:297px"><div class="c" style="left:21px;letter-spacing:0.213px">kimi-auth</div><div class="c" style="left:262px;letter-spacing:-0.098px">eyJhbGciOiJIUzUxMiIsInR5cCI6IkpXVCJ9.eyJpc3MiOiJ1c2VyL…</div><div class="c" style="left:626px;letter-spacing:0.187px">kimi.moo…</div><div class="c" style="left:701px">/</div><div class="c" style="left:776px;letter-spacing:-0.094px">2025-12-…</div><div class="c" style="left:851px;width:66px;text-align:right">427</div><div class="c" style="left:921px;width:75px;text-align:center">✓</div><div class="c" style="left:996px;width:75px;text-align:center">✓</div></div>
    <div class="row" style="top:317px"><div class="c" style="left:21px;letter-spacing:0.211px">ntes_utid</div><div class="c" style="left:262px;letter-spacing:-0.294px">tid._.VmmA718UHChFRlARFEPSR2iSfnFswoxR._.0</div><div class="c" style="left:626px;letter-spacing:0.187px">kimi.moo…</div><div class="c" style="left:701px">/</div><div class="c" style="left:776px;letter-spacing:-0.094px">2026-01-…</div><div class="c" style="left:851px;width:66px;text-align:right">51</div></div>
    <div class="row alt" style="top:337px"><div class="c" style="left:21px;letter-spacing:0.723px">ttwid</div><div class="c" style="left:262px;letter-spacing:-0.134px">1%7CgS40r3jHWu2QBjWOTt9s_8ciC-844NxD9EDpDee1JAU%7…</div><div class="c" style="left:626px;letter-spacing:0.045px">.bytedanc…</div><div class="c" style="left:701px">/</div><div class="c" style="left:776px;letter-spacing:0.005px">2025-11-…</div><div class="c" style="left:851px;width:66px;text-align:right">132</div><div class="c" style="left:921px;width:75px;text-align:center">✓</div><div class="c" style="left:996px;width:75px;text-align:center">✓</div></div>
    <div class="vl" style="left:457px"></div>
    <div class="vl" style="left:821px"></div>
    <div class="vl" style="left:896px"></div>
    <div class="vl" style="left:971px"></div>
    <div class="vl" style="left:1046px"></div>
    <div class="vl" style="left:1121px"></div>
    <div class="vl" style="left:1196px"></div>
    <div class="abs" style="left:457px;top:237px;width:1px;height:20px;background:#b3ccf7"></div><div class="abs" style="left:821px;top:237px;width:1px;height:20px;background:#b3ccf7"></div><div class="abs" style="left:896px;top:237px;width:1px;height:20px;background:#b3ccf7"></div><div class="abs" style="left:971px;top:237px;width:1px;height:20px;background:#b3ccf7"></div><div class="abs" style="left:1046px;top:237px;width:1px;height:20px;background:#b3ccf7"></div><div class="abs" style="left:1121px;top:237px;width:1px;height:20px;background:#b3ccf7"></div><div class="abs" style="left:1196px;top:237px;width:1px;height:20px;background:#b3ccf7"></div>
    <div class="abs" style="left:212px;top:228px;width:384px;height:56px;border:4px solid #f2433f;border-radius:8px"></div>
    <div class="abs" style="left:201px;top:491px;width:1062px;height:14px;background:#fff;border-top:1.600px solid #d3e3fd"></div>
    <div class="abs" style="left:206px;top:496.5px;font-size:12px;line-height:16px;font-weight:bold;color:#1f1f1f;white-space:nowrap">Cookie Value</div>
    <div class="abs" style="left:297px;top:499px;width:12px;height:12px;border:1px solid #6b6b6b;border-radius:2.500px;background:#fff"></div>
    <div class="abs" style="left:313px;top:497.5px;font-size:12px;line-height:16px;color:#1f1f1f;white-space:nowrap">显示已解码的网址</div>
    </div>
</div>
</body>
</html>
